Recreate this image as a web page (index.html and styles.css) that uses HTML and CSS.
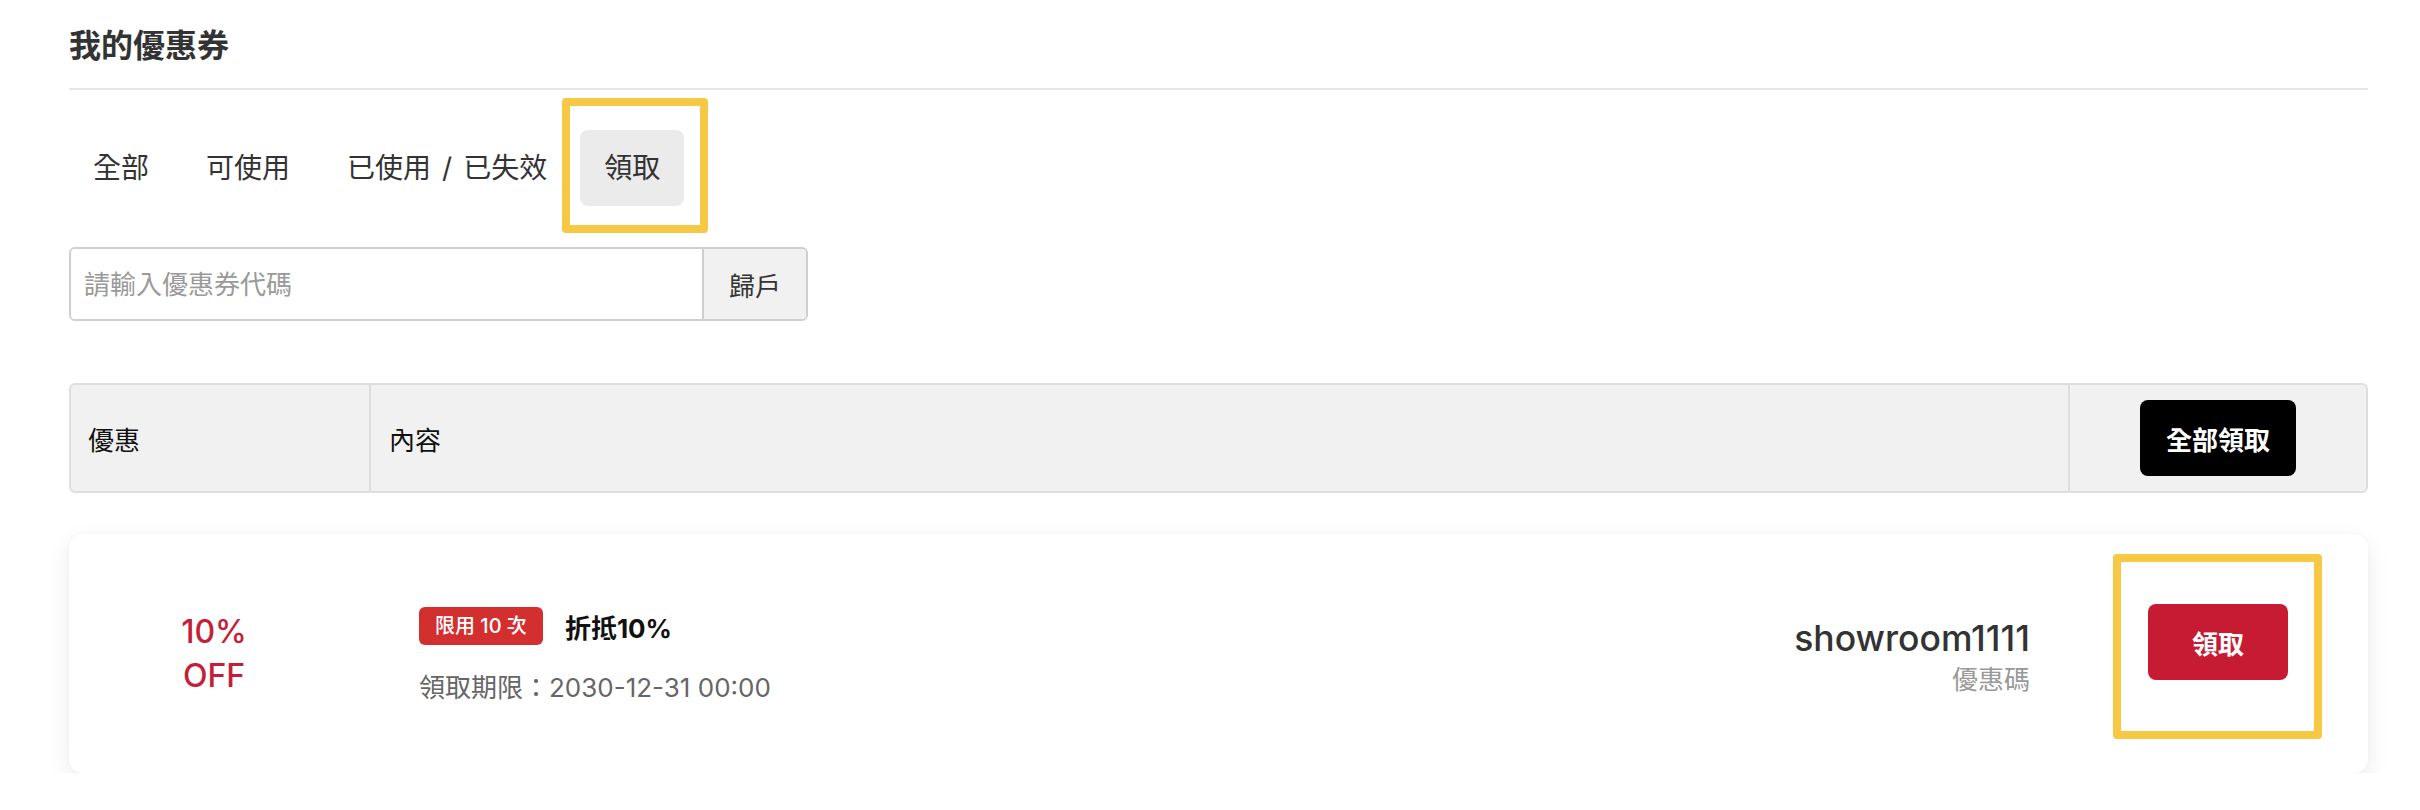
FILE: index.html
```html
<!DOCTYPE html>
<html lang="zh-Hant">
<head>
<meta charset="utf-8">
<title>我的優惠券</title>
<link rel="stylesheet" href="styles.css">
</head>
<body>
<main class="page">
  <h1 class="page-title">我的優惠券</h1>
  <nav class="tabs">
    <span class="tab">全部</span>
    <span class="tab">可使用</span>
    <span class="tab">已使用<span class="tab-sep">/</span>已失效</span>
    <span class="tab tab-active">領取<span class="mark mark-tab"></span></span>
  </nav>
  <form class="redeem">
    <input class="redeem-input" type="text" placeholder="請輸入優惠券代碼">
    <button class="redeem-btn" type="button">歸戶</button>
  </form>
  <div class="table-head">
    <div class="th th-offer">優惠</div>
    <div class="th th-content">內容</div>
    <div class="th th-action"><button class="btn-all" type="button">全部領取</button></div>
  </div>
  <div class="coupon">
    <div class="coupon-offer">10%<br>OFF</div>
    <div class="coupon-body">
      <div class="coupon-info">
        <div class="coupon-title-row"><span class="badge">限用 10 次</span><span class="coupon-title">折抵10%</span></div>
        <div class="coupon-date">領取期限：2030-12-31 00:00</div>
      </div>
      <div class="coupon-code">
        <div class="code">showroom1111</div>
        <div class="code-label">優惠碼</div>
      </div>
    </div>
    <div class="coupon-action">
      <button class="btn-claim" type="button">領取<span class="mark mark-claim"></span></button>
    </div>
  </div>
</main>
</body>
</html>
```

FILE: styles.css
```css
* { box-sizing: border-box; }

body {
  margin: 0;
  background: #fff;
  color: #333;
  font-family: Inter, "Noto Sans CJK TC", "Noto Sans", sans-serif;
}

.page {
  padding: 22px 52px 0 69px;
}

.page-title {
  margin: 0;
  font-size: 32px;
  line-height: 48px;
  font-weight: 700;
  color: #333;
  padding-bottom: 18px;
  border-bottom: 2px solid #e6e6e6;
}

.tabs {
  display: flex;
  gap: 9px;
  margin-top: 40px;
}

.tab {
  position: relative;
  font-size: 28px;
  line-height: 42px;
  padding: 17px 24px;
  border-radius: 8px;
  color: #333;
}

.tab-sep {
  padding: 0 11px;
}

.tab-active {
  background: #ebebeb;
}

.mark {
  position: absolute;
  border: 8px solid #f7c843;
  border-radius: 4px;
  pointer-events: none;
}

.mark-tab {
  left: -18px;
  right: -24px;
  top: -32px;
  bottom: -27px;
}

.redeem {
  display: flex;
  width: 739px;
  height: 74px;
  margin: 41px 0 0;
  border: 2px solid #cfcfcf;
  border-radius: 6px;
  overflow: hidden;
}

.redeem-input {
  flex: 1;
  border: 0;
  outline: none;
  padding: 0 13px;
  font-family: inherit;
  font-size: 26px;
  color: #333;
}

.redeem-input::placeholder {
  color: #9a9a9a;
}

.redeem-btn {
  width: 104px;
  border: 0;
  border-left: 2px solid #cfcfcf;
  background: #f1f1f1;
  font-family: inherit;
  font-size: 26px;
  color: #333;
  padding: 0;
}

.table-head {
  display: grid;
  grid-template-columns: 298px 1fr 298px;
  height: 110px;
  margin-top: 62px;
  border: 2px solid #dedede;
  border-radius: 6px;
  background: #f1f1f1;
}

.th {
  display: flex;
  align-items: center;
  font-size: 26px;
  color: #111;
}

.th-offer {
  padding-left: 17px;
}

.th-content {
  border-left: 2px solid #dedede;
  padding-left: 18px;
}

.th-action {
  border-left: 2px solid #dedede;
  justify-content: center;
}

.btn-all {
  width: 156px;
  height: 76px;
  padding: 0;
  border: 0;
  border-radius: 8px;
  background: #000;
  color: #fff;
  font-family: inherit;
  font-size: 26px;
  font-weight: 700;
}

.coupon {
  display: flex;
  align-items: center;
  height: 239px;
  margin-top: 41px;
  background: #fff;
  border-radius: 14px;
  box-shadow: 0 8px 24px rgba(0, 0, 0, 0.08), 0 0 4px rgba(0, 0, 0, 0.03);
}

.coupon-offer {
  width: 290px;
  text-align: center;
  color: #c41e3a;
  font-size: 32px;
  line-height: 44px;
  font-weight: 500;
}

.coupon-body {
  flex: 1;
  display: flex;
  align-items: center;
  justify-content: space-between;
  padding: 8px 38px 0 60px;
}

.coupon-title-row {
  display: flex;
  align-items: center;
}

.badge {
  background: #d32f2f;
  color: #fff;
  font-size: 20px;
  line-height: 28px;
  padding: 5px 16px;
  border-radius: 6px;
  font-weight: 500;
}

.coupon-title {
  margin-left: 22px;
  font-size: 26px;
  font-weight: 700;
  color: #111;
}

.coupon-date {
  margin-top: 23px;
  font-size: 26px;
  line-height: 40px;
  color: #666;
}

.coupon-code {
  text-align: right;
}

.code {
  font-size: 35.5px;
  line-height: 44px;
  font-weight: 500;
  color: #333;
}

.code-label {
  font-size: 26px;
  line-height: 38px;
  color: #999;
}

.coupon-action {
  width: 300px;
  display: flex;
  justify-content: center;
}

.btn-claim {
  position: relative;
  width: 140px;
  height: 76px;
  margin-bottom: 23px;
  padding: 0;
  border: 0;
  border-radius: 8px;
  background: #c61b33;
  color: #fff;
  font-family: inherit;
  font-size: 26px;
  font-weight: 700;
}

.mark-claim {
  left: -35px;
  right: -34px;
  top: -50px;
  bottom: -59px;
}
```
